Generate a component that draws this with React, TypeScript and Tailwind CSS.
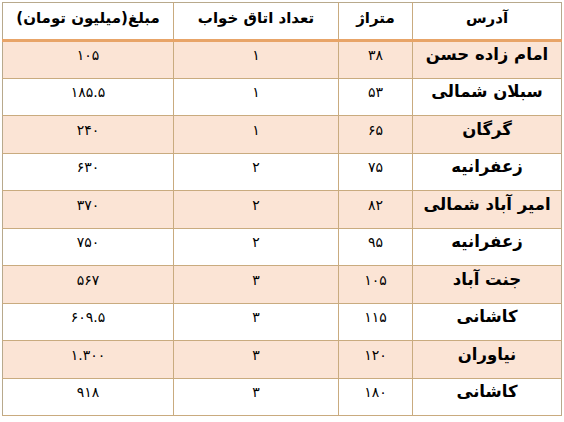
const rows = [
  { address: "امام زاده حسن", area: "۳۸", rooms: "۱", price: "۱۰۵" },
  { address: "سبلان شمالی", area: "۵۳", rooms: "۱", price: "۱۸۵.۵" },
  { address: "گرگان", area: "۶۵", rooms: "۱", price: "۲۴۰" },
  { address: "زعفرانیه", area: "۷۵", rooms: "۲", price: "۶۳۰" },
  { address: "امیر آباد شمالی", area: "۸۲", rooms: "۲", price: "۳۷۰" },
  { address: "زعفرانیه", area: "۹۵", rooms: "۲", price: "۷۵۰" },
  { address: "جنت آباد", area: "۱۰۵", rooms: "۳", price: "۵۶۷" },
  { address: "کاشانی", area: "۱۱۵", rooms: "۳", price: "۶۰۹.۵" },
  { address: "نیاوران", area: "۱۲۰", rooms: "۳", price: "۱.۳۰۰" },
  { address: "کاشانی", area: "۱۸۰", rooms: "۳", price: "۹۱۸" },
];

export default function App() {
  return (
    <div className="min-h-screen bg-white pl-[2px] pt-[2px] font-['DejaVu_Sans',sans-serif] text-black">
      <table dir="rtl" className="w-[559px] table-fixed border-collapse border border-[#b8a98c]">
        <colgroup>
          <col className="w-[149px]" />
          <col className="w-[74px]" />
          <col className="w-[165px]" />
          <col className="w-[171px]" />
        </colgroup>
        <thead>
          <tr className="h-[38px] border-b-[3px] border-b-[#e8a468] text-[15px] font-bold">
            <th className="border-l border-[#c9ab7f] px-1 pb-[6px] align-middle">آدرس</th>
            <th className="border-l border-[#c9ab7f] px-1 pb-[6px] align-middle">متراژ</th>
            <th className="border-l border-[#c9ab7f] px-1 pb-[6px] align-middle">تعداد اتاق خواب</th>
            <th className="px-1 pb-[6px] align-middle">مبلغ(میلیون تومان)</th>
          </tr>
        </thead>
        <tbody>
          {rows.map((r, i) => (
            <tr
              key={i}
              className={`h-[37.5px] border-b border-[#c9ab7f] ${i % 2 === 0 ? "bg-[#fbe4d5]" : "bg-white"}`}
            >
              <td className="border-l border-[#c9ab7f] px-1 pb-[8px] text-center align-middle text-[16.5px] font-bold">
                {r.address}
              </td>
              <td className="border-l border-[#c9ab7f] px-1 pb-[8px] text-center align-middle text-[14px]">
                {r.area}
              </td>
              <td className="border-l border-[#c9ab7f] px-1 pb-[8px] text-center align-middle text-[14px]">
                {r.rooms}
              </td>
              <td className="px-1 pb-[8px] text-center align-middle text-[14px]">{r.price}</td>
            </tr>
          ))}
        </tbody>
      </table>
    </div>
  );
}
